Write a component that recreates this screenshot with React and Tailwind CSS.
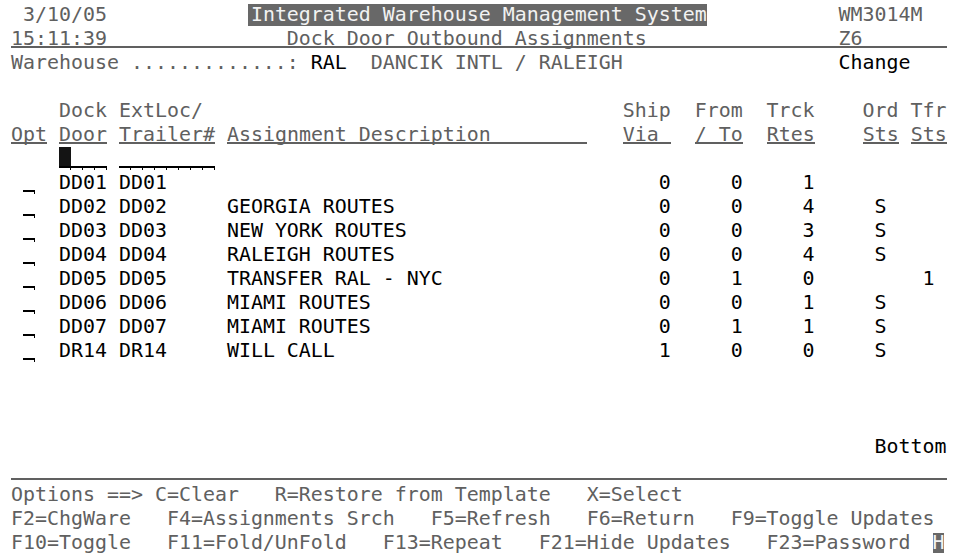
import React from "react";

const sp = (n) => " ".repeat(n);

const rows = [
  ["DD01", "DD01", "", 0, 0, 1, "", ""],
  ["DD02", "DD02", "GEORGIA ROUTES", 0, 0, 4, "S", ""],
  ["DD03", "DD03", "NEW YORK ROUTES", 0, 0, 3, "S", ""],
  ["DD04", "DD04", "RALEIGH ROUTES", 0, 0, 4, "S", ""],
  ["DD05", "DD05", "TRANSFER RAL - NYC", 0, 1, 0, "", "1"],
  ["DD06", "DD06", "MIAMI ROUTES", 0, 0, 1, "S", ""],
  ["DD07", "DD07", "MIAMI ROUTES", 0, 1, 1, "S", ""],
  ["DR14", "DR14", "WILL CALL", 1, 0, 0, "S", ""],
];

function Row({ children, className = "" }) {
  return <div className={"h-6 leading-6 whitespace-pre " + className}>{children}</div>;
}

function U({ children }) {
  return (
    <span className="inline-block align-top h-[21px] border-b-2 border-[#606060]">
      {children}
    </span>
  );
}

// one cell of an input field: underline with a small tick at the cell edge
function Cell({ cursor }) {
  return (
    <span className="inline-block align-top w-[12px] h-6">
      <span className={"block h-[19px] " + (cursor ? "bg-[#141414]" : "")} />
      <span className="block h-[2px] bg-black" />
      <span className="block h-[2px] w-px ml-[11px] bg-black" />
    </span>
  );
}

function Field({ len, cursor }) {
  return (
    <span className="inline-block align-top h-6">
      {Array.from({ length: len }).map((_, i) => (
        <Cell key={i} cursor={cursor && i === 0} />
      ))}
    </span>
  );
}

export default function App() {
  return (
    <div className="w-[961px] h-[555px] overflow-hidden bg-white pt-[3px] pl-[11px] font-['DejaVu_Sans_Mono',monospace] text-[19.93px] text-[#606060]">
      <Row>
        {" 3/10/05" + sp(12)}
        <span className="inline-block align-top mt-px h-[22px] leading-[22px] -ml-[3px] pl-[3px] bg-[#686868] text-[#f2f2f2]">
          Integrated Warehouse Management System
        </span>
        {sp(11) + "WM3014M"}
      </Row>
      <Row>
        <div className="w-[936px] h-[21px] border-b-2 border-[#606060]">
          {"15:11:39" + sp(15) + "Dock Door Outbound Assignments" + sp(16) + "Z6"}
        </div>
      </Row>
      <Row>
        {"Warehouse .............: "}
        <span className="text-black">RAL</span>
        {"  DANCIK INTL / RALEIGH" + sp(18)}
        <span className="text-black">Change</span>
      </Row>
      <Row />
      <Row>{"    Dock ExtLoc/" + sp(35) + "Ship  From  Trck    Ord Tfr"}</Row>
      <Row>
        <U>Opt</U>
        {" "}
        <U>Door</U>
        {" "}
        <U>Trailer#</U>
        {" "}
        <U>{"Assignment Description        "}</U>
        {"   "}
        <U>{"Via "}</U>
        {"  "}
        <U>/ To</U>
        {"  "}
        <U>Rtes</U>
        {"    "}
        <U>Sts</U>
        {" "}
        <U>Sts</U>
      </Row>
      <Row>
        {sp(4)}
        <Field len={4} cursor />
        {" "}
        <Field len={8} />
      </Row>
      {rows.map(([door, ext, desc, ship, from, trck, ord, tfr]) => (
        <Row key={door} className="text-black">
          {" "}
          <Field len={1} />
          {"  " + door + " " + ext + sp(5) + desc.padEnd(36) + ship + sp(5) + from + sp(5) + trck + sp(5) + (ord || " ") + sp(3) + (tfr || " ")}
        </Row>
      ))}
      <Row />
      <Row />
      <Row />
      <Row className="text-black">{sp(72) + "Bottom"}</Row>
      <Row>
        <div className="w-[936px] h-[21px] border-b-2 border-[#606060]" />
      </Row>
      <Row>{"Options ==> C=Clear   R=Restore from Template   X=Select"}</Row>
      <Row>{"F2=ChgWare   F4=Assignments Srch   F5=Refresh   F6=Return   F9=Toggle Updates"}</Row>
      <Row>
        {"F10=Toggle   F11=Fold/UnFold   F13=Repeat   F21=Hide Updates   F23=Password "}
        <span className="inline-block w-[10px]" />
        <span className="inline-block align-top mt-[2px] h-[20px] leading-[20px] w-[11px] bg-[#686868] text-[#f2f2f2]">
          H
        </span>
      </Row>
    </div>
  );
}
